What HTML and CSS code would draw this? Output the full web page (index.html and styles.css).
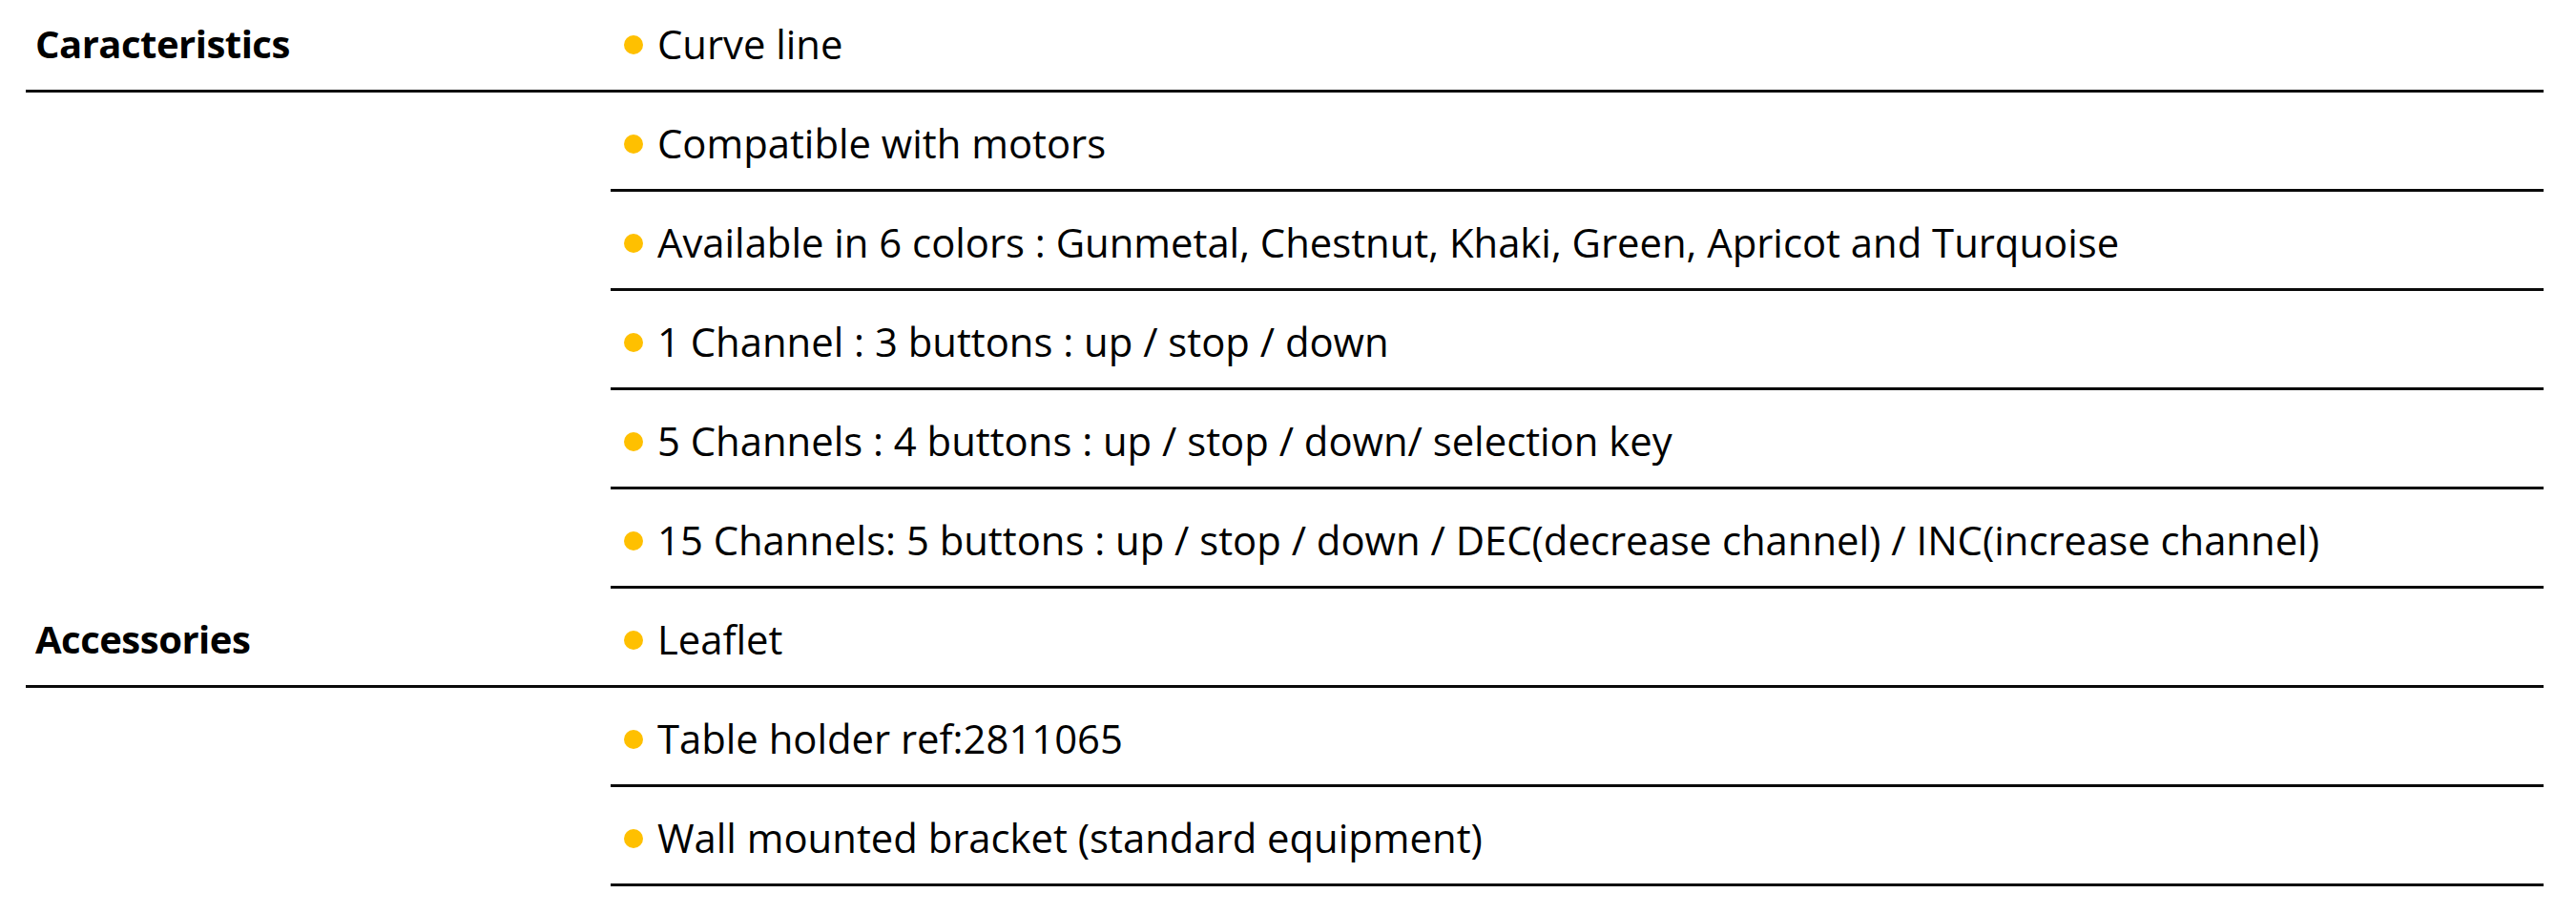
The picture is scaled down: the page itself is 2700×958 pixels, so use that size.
FILE: index.html
```html
<!DOCTYPE html>
<html lang="en">
<head>
<meta charset="utf-8">
<title>Specifications</title>
<link rel="stylesheet" href="styles.css">
</head>
<body>
<div class="spec">
  <section class="group">
    <div class="row first">
      <div class="label">Caracteristics</div>
      <div class="value"><span class="dot"></span>Curve line</div>
    </div>
    <div class="row">
      <div class="label"></div>
      <div class="value"><span class="dot"></span>Compatible with motors</div>
    </div>
    <div class="row">
      <div class="label"></div>
      <div class="value"><span class="dot"></span>Available in 6 colors : Gunmetal, Chestnut, Khaki, Green, Apricot and Turquoise</div>
    </div>
    <div class="row">
      <div class="label"></div>
      <div class="value"><span class="dot"></span>1 Channel : 3 buttons : up / stop / down</div>
    </div>
    <div class="row">
      <div class="label"></div>
      <div class="value"><span class="dot"></span>5 Channels : 4 buttons : up / stop / down/ selection key</div>
    </div>
    <div class="row">
      <div class="label"></div>
      <div class="value"><span class="dot"></span>15 Channels: 5 buttons : up / stop / down / DEC(decrease channel) / INC(increase channel)</div>
    </div>
  </section>
  <section class="group">
    <div class="row first">
      <div class="label">Accessories</div>
      <div class="value"><span class="dot"></span>Leaflet</div>
    </div>
    <div class="row">
      <div class="label"></div>
      <div class="value"><span class="dot"></span>Table holder ref:2811065</div>
    </div>
    <div class="row">
      <div class="label"></div>
      <div class="value"><span class="dot"></span>Wall mounted bracket (standard equipment)</div>
    </div>
  </section>
</div>
</body>
</html>
```

FILE: styles.css
```css
* {
  box-sizing: border-box;
}

body {
  margin: 0;
  background: #ffffff;
  color: #000000;
  font-family: "Open Sans", "Noto Sans", "Liberation Sans", sans-serif;
}

.spec {
  margin-left: 27px;
  width: 2639px;
}

.row {
  display: grid;
  grid-template-columns: 613px 1fr;
  height: 104px;
}

.group:first-child .row:first-child {
  height: 97px;
}

.row.first {
  border-bottom: 3px solid #0a0a0a;
}

.row:not(.first) .value {
  border-bottom: 3px solid #0a0a0a;
}

.label,
.value {
  display: flex;
  align-items: flex-end;
  padding-bottom: 20px;
  font-size: 41.8px;
  white-space: nowrap;
}

.label {
  padding-left: 10px;
  font-size: 40px;
  letter-spacing: -0.5px;
  font-weight: 700;
  padding-bottom: 21px;
}

.value {
  padding-left: 14px;
}

.dot {
  display: inline-block;
  width: 20px;
  height: 20px;
  border-radius: 50%;
  background: #ffc000;
  margin-right: 15px;
  margin-bottom: 17px;
  flex: none;
}
```
